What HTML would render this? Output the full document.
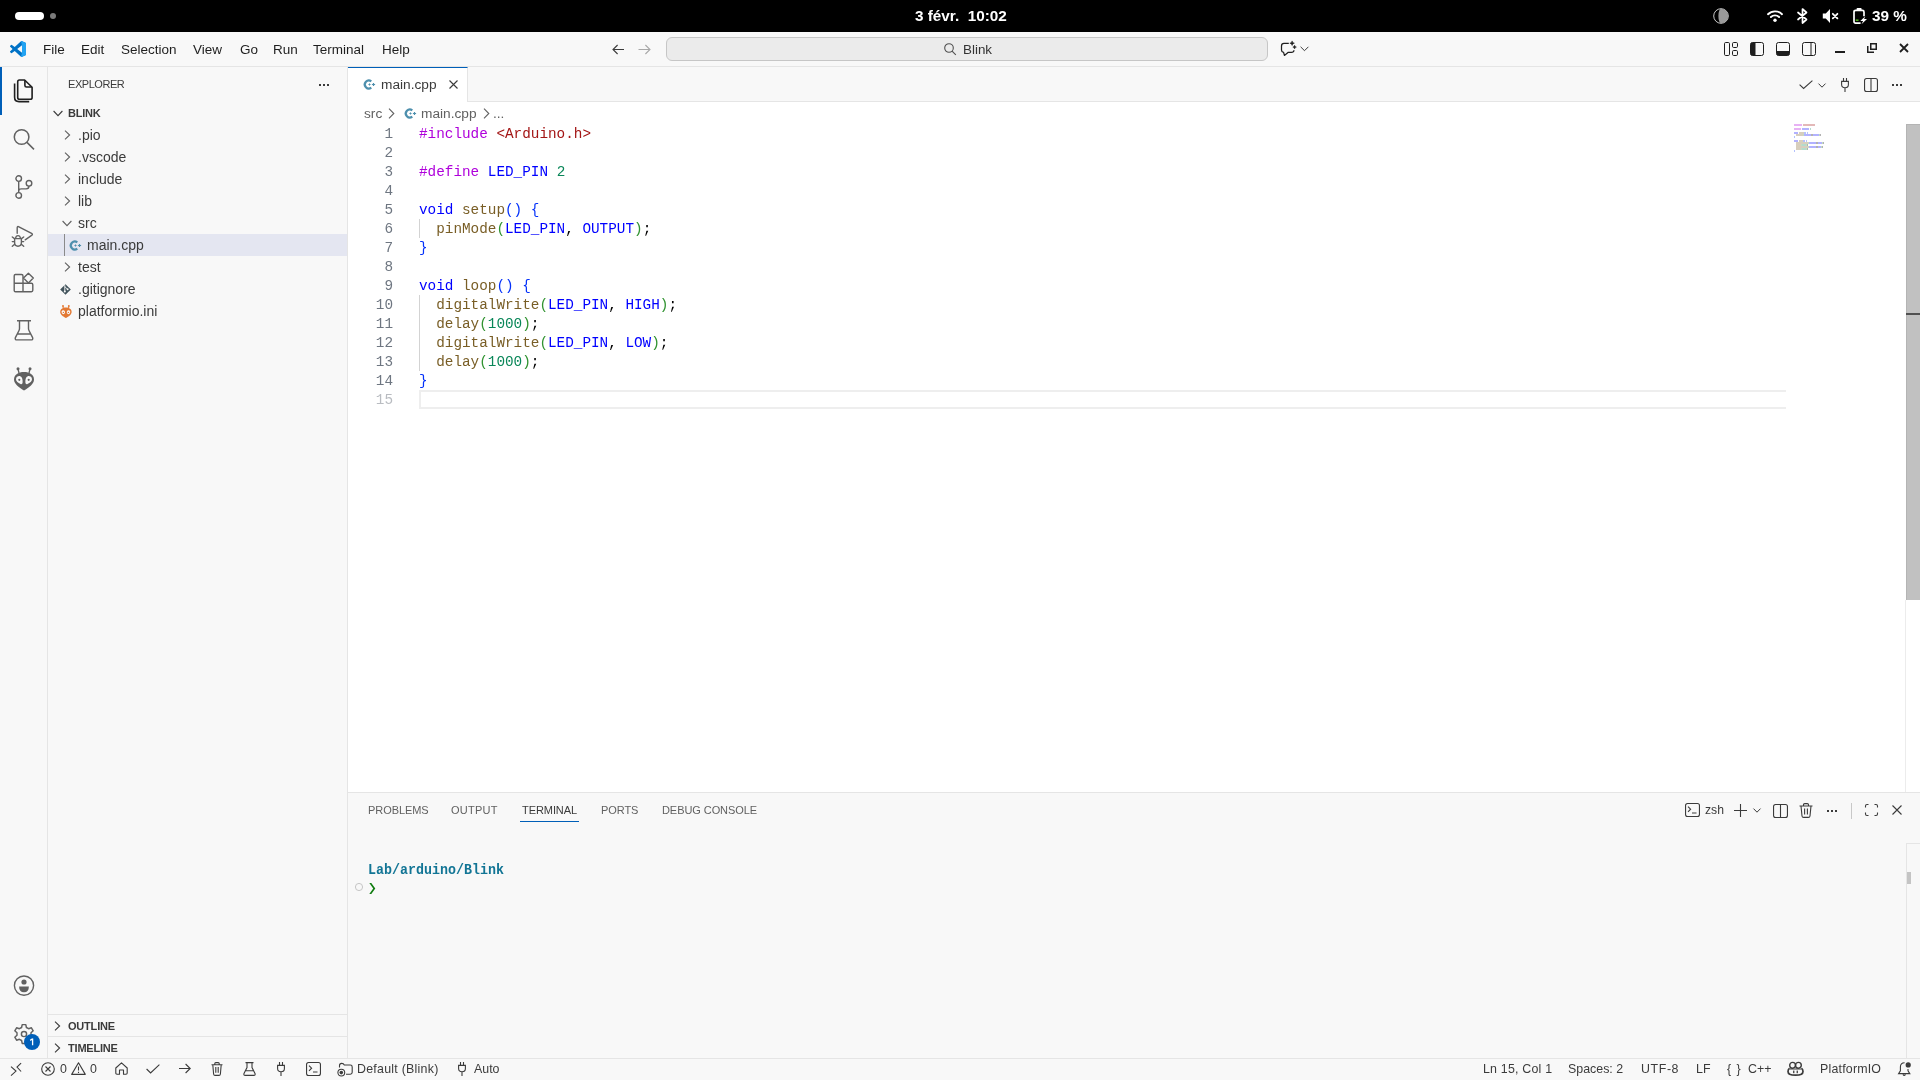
<!DOCTYPE html>
<html><head><meta charset="utf-8">
<style>
*{margin:0;padding:0;box-sizing:border-box}
html,body{width:1920px;height:1080px;overflow:hidden;background:#f8f8f8;font-family:"Liberation Sans",sans-serif;color:#3b3b3b}
.a{position:absolute}
.t{position:absolute;white-space:pre;line-height:1;will-change:transform}
svg{position:absolute;overflow:visible}
#sys{left:0;top:0;width:1920px;height:32px;background:#000}
#title{left:0;top:32px;width:1920px;height:35px;background:#f8f8f8;border-bottom:1px solid #e5e5e5}
.menu{font-size:13.5px;color:#1e1e1e;top:43px}
#act{left:0;top:67px;width:48px;height:991px;background:#f8f8f8;border-right:1px solid #e5e5e5}
#side{left:48px;top:67px;width:300px;height:991px;background:#f8f8f8;border-right:1px solid #e5e5e5}
#editor{left:348px;top:102px;width:1572px;height:690px;background:#fff}
#tabs{left:348px;top:67px;width:1572px;height:35px;background:#f8f8f8;border-bottom:1px solid #e5e5e5}
#panel{left:348px;top:792px;width:1572px;height:266px;background:#f8f8f8;border-top:1px solid #e5e5e5}
#status{left:0;top:1058px;width:1920px;height:22px;background:#f8f8f8;border-top:1px solid #e5e5e5}
.tree{font-size:13.5px;color:#3b3b3b}
.code{font-family:"Liberation Mono",monospace;font-size:14.33px;line-height:19px}
.ln{font-family:"Liberation Mono",monospace;font-size:14.33px;color:#6e7681;text-align:right;width:40px}
</style></head><body>
<div id="sys" class="a"></div>
<div id="title" class="a"></div>
<div id="act" class="a"></div>
<div id="side" class="a"></div>
<div id="tabs" class="a"></div>
<div id="editor" class="a"></div>
<div id="panel" class="a"></div>
<div id="status" class="a"></div>

<!-- SYSTEM BAR -->
<div class="a" style="left:15px;top:12px;width:29px;height:8px;border-radius:4px;background:#fff"></div>
<div class="a" style="left:50px;top:13px;width:6px;height:6px;border-radius:3px;background:#7a7a7a"></div>
<div class="t" style="left:914.5px;top:8px;font-size:15.3px;font-weight:bold;color:#fff">3 févr.  10:02</div>
<svg style="left:1713px;top:8px" width="16" height="16" viewBox="0 0 16 16"><circle cx="8" cy="8" r="7.3" fill="none" stroke="#ddd" stroke-width="0.9"/><path d="M8 0.7 A7.3 7.3 0 0 1 8 15.3 A2.6 7.3 0 0 1 8 0.7Z" fill="#9a9a9a"/></svg>
<svg style="left:1767px;top:10px" width="16" height="12" viewBox="0 0 16 12"><path d="M1 4.2 A10 10 0 0 1 15 4.2" fill="none" stroke="#fff" stroke-width="1.9" stroke-linecap="round"/><path d="M3.9 7 A6 6 0 0 1 12.1 7" fill="none" stroke="#fff" stroke-width="1.9" stroke-linecap="round"/><circle cx="8" cy="10.2" r="1.7" fill="#fff"/></svg>
<svg style="left:1797px;top:8px" width="11" height="16" viewBox="0 0 11 16"><path d="M1 4.5 L9.5 11.5 L5.5 15 V1 L9.5 4.5 L1 11.5" fill="none" stroke="#fff" stroke-width="1.7" stroke-linejoin="round" stroke-linecap="round"/></svg>
<svg style="left:1822px;top:9px" width="17" height="14" viewBox="0 0 17 14"><path d="M0.8 4.4 H3.8 L8 0 V14 L3.8 9.6 H0.8Z" fill="#fff"/><path d="M10.8 4.8 L15.4 9.4 M15.4 4.8 L10.8 9.4" stroke="#fff" stroke-width="1.8" stroke-linecap="round"/></svg>
<svg style="left:1853px;top:8px" width="15" height="17" viewBox="0 0 15 17"><rect x="3.6" y="0" width="5" height="2.6" rx="0.8" fill="#fff"/><path d="M7.6 15.1 H2.6 Q1 15.1 1 13.5 V3.9 Q1 2.3 2.6 2.3 H9.4 Q11 2.3 11 3.9 V8.2" fill="none" stroke="#fff" stroke-width="1.7"/><rect x="2.7" y="11.4" width="2.8" height="1.6" fill="#4caf1a"/><path d="M12.3 8.2 L7.3 13 H10.1 L8.5 16.2 L14 11 H11.1Z" fill="#fff"/></svg>
<div class="t" style="left:1871.5px;top:8px;font-size:15.3px;font-weight:bold;color:#fff">39 %</div>

<!-- TITLE BAR -->
<svg style="left:10px;top:41px" width="16" height="16" viewBox="0 0 100 100"><path fill="#0072C6" d="M96.46 10.8 75.86.87a6.23 6.23 0 0 0-7.1 1.2L29.35 38.04 12.17 25a4.16 4.16 0 0 0-5.32.24L1.34 30.25a4.17 4.17 0 0 0 0 6.16L16.25 50 1.34 63.6a4.17 4.17 0 0 0 0 6.16l5.51 5a4.16 4.16 0 0 0 5.32.24l17.18-13.04L68.76 97.93a6.22 6.22 0 0 0 7.1 1.2l20.6-9.92A6.25 6.25 0 0 0 100 83.6V16.4a6.25 6.25 0 0 0-3.54-5.6zM75.01 72.7 45.11 50l29.9-22.7z"/><path fill="#007ACC" d="M96.46 10.8 75.86.87a6.23 6.23 0 0 0-7.1 1.2L29.35 38.04 12.17 25a4.16 4.16 0 0 0-5.32.24L1.34 30.25a4.17 4.17 0 0 0 0 6.16L16.25 50 1.34 63.6a4.17 4.17 0 0 0 0 6.16l5.51 5a4.16 4.16 0 0 0 5.32.24l17.18-13.04L68.76 97.93a6.22 6.22 0 0 0 7.1 1.2l20.6-9.92A6.25 6.25 0 0 0 100 83.6V16.4a6.25 6.25 0 0 0-3.54-5.6zM75.01 72.7 45.11 50l29.9-22.7z" transform="translate(0,0)" opacity="0"/><path fill="#22A3F2" d="M68.76 2.07a6.23 6.23 0 0 1 7.1-1.2l20.6 9.93A6.25 6.25 0 0 1 100 16.4v67.2a6.25 6.25 0 0 1-3.54 5.63l-20.6 9.92a6.22 6.22 0 0 1-7.1-1.2L75.01 72.7V27.3z"/></svg>
<div class="t menu" style="left:43px">File</div>
<div class="t menu" style="left:81px">Edit</div>
<div class="t menu" style="left:121px">Selection</div>
<div class="t menu" style="left:193px">View</div>
<div class="t menu" style="left:240px">Go</div>
<div class="t menu" style="left:273px">Run</div>
<div class="t menu" style="left:313px">Terminal</div>
<div class="t menu" style="left:382px">Help</div>
<svg style="left:612px;top:43.5px" width="13" height="11" viewBox="0 0 13 11"><path d="M12 5.5 H1.2 M5.6 1 L1 5.5 L5.6 10" fill="none" stroke="#3b3b3b" stroke-width="1.1"/></svg>
<svg style="left:638px;top:43.5px" width="13" height="11" viewBox="0 0 13 11"><path d="M0.5 5.5 H11.8 M7.4 1 L12 5.5 L7.4 10" fill="none" stroke="#a8a8a8" stroke-width="1.1"/></svg>
<div class="a" style="left:666px;top:37px;width:602px;height:24px;border-radius:6px;background:#ebebeb;border:1px solid #c6c6c6"></div>
<svg style="left:944px;top:43px" width="13" height="13" viewBox="0 0 13 13"><circle cx="5" cy="5" r="4.3" fill="none" stroke="#505050" stroke-width="1.1"/><path d="M8.1 8.1 L11.8 11.8" stroke="#505050" stroke-width="1.1"/></svg>
<div class="t" style="left:963px;top:43px;font-size:13.4px;color:#333">Blink</div>
<svg style="left:1280px;top:40px" width="17" height="17" viewBox="0 0 17 17"><path d="M8.8 3.4 H4 Q1.5 3.4 1.5 6 V9.9 Q1.5 12 3.6 12.4 L4.4 15.4 L8 12.4 H11.4 Q13.8 12.4 14 10.2" fill="none" stroke="#1e1e1e" stroke-width="1.25" stroke-linejoin="round"/><path d="M12.1 0.9 L12.8 2.5 L14.4 3.2 L12.8 3.9 L12.1 5.5 L11.4 3.9 L9.8 3.2 L11.4 2.5Z M14.6 5.2 L15.2 6.6 L16.4 7.1 L15.2 7.6 L14.6 9 L14 7.6 L12.8 7.1 L14 6.6Z" fill="#1e1e1e" stroke="#1e1e1e" stroke-width="0.5" stroke-linejoin="round"/></svg>
<svg style="left:1300px;top:46px" width="9" height="6" viewBox="0 0 9 6"><path d="M0.6 0.8 L4.5 4.7 L8.4 0.8" fill="none" stroke="#3b3b3b" stroke-width="1"/></svg>
<svg style="left:1724px;top:42px" width="14" height="14" viewBox="0 0 14 14" fill="none" stroke="#1e1e1e" stroke-width="1"><rect x="0.5" y="0.5" width="5" height="13" rx="1.2"/><rect x="8.5" y="0.5" width="5" height="5" rx="1.2"/><rect x="8.5" y="8.5" width="5" height="5" rx="1.2"/></svg>
<svg style="left:1750px;top:42px" width="14" height="14" viewBox="0 0 14 14"><rect x="0.5" y="0.5" width="13" height="13" rx="2" fill="none" stroke="#1e1e1e" stroke-width="1"/><path d="M2.5 0.5 H5.5 V13.5 H2.5 Q0.5 13.5 0.5 11.5 V2.5 Q0.5 0.5 2.5 0.5Z" fill="#1e1e1e"/></svg>
<svg style="left:1776px;top:42px" width="14" height="14" viewBox="0 0 14 14"><rect x="0.5" y="0.5" width="13" height="13" rx="2" fill="none" stroke="#1e1e1e" stroke-width="1"/><path d="M0.5 9 H13.5 V11.5 Q13.5 13.5 11.5 13.5 H2.5 Q0.5 13.5 0.5 11.5Z" fill="#1e1e1e"/></svg>
<svg style="left:1802px;top:42px" width="14" height="14" viewBox="0 0 14 14" fill="none" stroke="#1e1e1e" stroke-width="1"><rect x="0.5" y="0.5" width="13" height="13" rx="2"/><path d="M9 0.5 V13.5"/></svg>
<div class="a" style="left:1835px;top:51px;width:10px;height:2px;background:#1e1e1e"></div>
<svg style="left:1867px;top:43px" width="10" height="10" viewBox="0 0 10 10" fill="none" stroke="#1e1e1e" stroke-width="1.5"><rect x="3.75" y="0.75" width="5.5" height="5.5"/><path d="M0.75 3 V9.25 H7"/></svg>
<svg style="left:1899px;top:43px" width="10" height="10" viewBox="0 0 10 10"><path d="M1 1 L9 9 M9 1 L1 9" stroke="#1e1e1e" stroke-width="1.8"/></svg>

<!-- ACTIVITY BAR -->
<div class="a" style="left:0;top:67px;width:2px;height:48px;background:#005fb8"></div>
<svg style="left:12px;top:79px" width="24" height="24" viewBox="0 0 24 24" fill="none" stroke="#1f1f1f" stroke-width="1.6" stroke-linejoin="round"><path d="M7.4 1 H12.6 L20.1 8.3 V18.4 Q20.1 20.2 18.3 20.2 H7.5 Q5.7 20.2 5.7 18.4 V2.8 Q5.7 1 7.4 1Z"/><path d="M12.9 1.2 V6.4 Q12.9 8 14.5 8 H20"/><path d="M2.6 4.4 V18.2 Q2.6 22.6 7 22.6 H17.2"/></svg>
<svg style="left:12px;top:127px" width="24" height="24" viewBox="0 0 24 24" fill="none" stroke="#616161" stroke-width="1.5"><circle cx="9.6" cy="10" r="7.3"/><path d="M15 15.4 L22 22.4"/></svg>
<svg style="left:12px;top:175px" width="24" height="24" viewBox="0 0 24 24" fill="none" stroke="#616161" stroke-width="1.4"><circle cx="6.7" cy="3.6" r="2.8"/><circle cx="17" cy="8.3" r="2.8"/><circle cx="6.7" cy="20.4" r="2.8"/><path d="M6.7 6.4 V17.6 M17 11.1 Q17 13.9 14.2 13.9 H9.5 Q6.7 13.9 6.7 16"/></svg>
<svg style="left:10px;top:221px" width="28" height="30" viewBox="0 0 28 30" fill="none" stroke="#616161" stroke-width="1.4" stroke-linecap="round" stroke-linejoin="round"><path d="M7.2 12.2 V6.8 Q7.2 5 8.9 5.8 L21.6 12.4 Q23.2 13.4 21.6 14.4 L15.2 18.8"/><path d="M5.5 17.4 Q6 14.6 8 14.6 Q10 14.6 10.6 17.4 M4.8 17.6 H11.2 M4.6 17.6 V21.5 Q4.6 25.2 8 25.2 Q11.4 25.2 11.4 21.5 V17.6 M2.3 16 L4.5 17.6 M13.7 16 L11.5 17.6 M2.3 20.6 H4.5 M13.7 20.6 H11.5 M2.3 25.3 L4.7 23.3 M13.7 25.3 L11.3 23.3"/></svg>
<svg style="left:12px;top:271px" width="24" height="24" viewBox="0 0 24 24" fill="none" stroke="#616161" stroke-width="1.4"><path d="M3 3.5 H9.5 Q11 3.5 11 5 V20.7 H3.5 Q2.2 20.7 2.2 19.4 V4.8 Q2.2 3.5 3.5 3.5Z M2.2 12.3 H19.4 Q20.8 12.3 20.8 13.7 V19.3 Q20.8 20.7 19.4 20.7 H11"/><path d="M16.4 2.2 L21.3 7.1 L16.4 12 L11.5 7.1Z" stroke-linejoin="round"/></svg>
<svg style="left:12px;top:319px" width="24" height="24" viewBox="0 0 24 24" fill="none" stroke="#616161" stroke-width="1.4"><path d="M5 1.8 H19 M7.5 1.8 V9.5 Q7.5 10.5 6.9 11.7 L3.4 18.6 Q2.6 20.9 5 20.9 H19 Q21.4 20.9 20.6 18.6 L17.1 11.7 Q16.5 10.5 16.5 9.5 V1.8 M5.8 15 H18.2"/></svg>
<svg style="left:13px;top:367px" width="22" height="24" viewBox="0 0 22 24"><path d="M6 6 L5 2 M16 6 L17 2" stroke="#616161" stroke-width="1.3"/><circle cx="5" cy="1.7" r="1.5" fill="#616161"/><circle cx="17" cy="1.7" r="1.5" fill="#616161"/><path d="M11 5 C5.5 5 1 7.5 1 12.5 C1 17 6.5 21 11 23.5 C15.5 21 21 17 21 12.5 C21 7.5 16.5 5 11 5Z" fill="#616161"/><path d="M3 12.3 C3 9.5 5.5 8.8 7.2 9.2 C9.2 9.7 9.8 12.5 9.6 15.5 C9.5 17 8.5 17.5 7.5 17 C5 15.8 3 14.5 3 12.3Z M19 12.3 C19 9.5 16.5 8.8 14.8 9.2 C12.8 9.7 12.2 12.5 12.4 15.5 C12.5 17 13.5 17.5 14.5 17 C17 15.8 19 14.5 19 12.3Z" fill="#f8f8f8"/><circle cx="6.3" cy="12.8" r="1.1" fill="#616161"/><circle cx="15.7" cy="12.8" r="1.1" fill="#616161"/></svg>
<svg style="left:12px;top:974px" width="24" height="24" viewBox="0 0 24 24"><circle cx="12" cy="11.6" r="9.6" fill="none" stroke="#616161" stroke-width="1.4"/><circle cx="12" cy="8" r="2.6" fill="#616161"/><path d="M7.1 12.4 H16.9 Q16.9 18.2 12 18.2 Q7.1 18.2 7.1 12.4Z" fill="#616161"/></svg>
<svg style="left:12px;top:1022.8px" width="24" height="24" viewBox="0 0 24 24" fill="none" stroke="#616161" stroke-width="1.45"><path d="M10.2 1.6 H13.8 L14.4 4.5 L16.6 5.7 L19.4 4.8 L21.2 7.8 L19 9.8 V12.2 L21.2 14.2 L19.4 17.2 L16.6 16.3 L14.4 17.5 L13.8 20.4 H10.2 L9.6 17.5 L7.4 16.3 L4.6 17.2 L2.8 14.2 L5 12.2 V9.8 L2.8 7.8 L4.6 4.8 L7.4 5.7 L9.6 4.5Z" stroke-linejoin="round"/><circle cx="12" cy="11" r="2.6"/></svg>
<div class="a" style="left:24px;top:1034px;width:16px;height:16px;border-radius:8px;background:#005fb8"></div>
<svg style="left:29px;top:1038px" width="6" height="8" viewBox="0 0 6 8"><path d="M3.6 0.6 V7.2 M3.6 0.8 L1.2 2.4" fill="none" stroke="#fff" stroke-width="1.3" stroke-linejoin="round"/></svg>

<!-- SIDEBAR -->
<div class="t" style="left:68px;top:78.69px;font-size:11px;letter-spacing:-0.45px;color:#3b3b3b">EXPLORER</div>
<svg style="left:319px;top:84px" width="10" height="2" viewBox="0 0 10 2" fill="#3b3b3b"><rect x="0" y="0" width="2" height="2"/><rect x="4" y="0" width="2" height="2"/><rect x="8" y="0" width="2" height="2"/></svg>
<svg style="left:53px;top:110px" width="10" height="7" viewBox="0 0 10 7"><path d="M0.6 1 L5 5.6 L9.4 1" fill="none" stroke="#3b3b3b" stroke-width="1.1"/></svg>
<div class="t" style="left:68px;top:107.69px;font-size:11px;font-weight:bold;letter-spacing:-0.2px;color:#3b3b3b">BLINK</div>
<div class="a" style="left:48px;top:234px;width:299px;height:22px;background:#e4e6f1"></div>
<div class="a" style="left:64px;top:234px;width:1px;height:22px;background:#8a8a8a"></div>
<svg style="left:64px;top:130px" width="7" height="10" viewBox="0 0 7 10"><path d="M1 0.6 L5.6 5 L1 9.4" fill="none" stroke="#616161" stroke-width="1.1"/></svg>
<div class="t" style="left:78px;top:128.15px;font-size:14px;color:#3b3b3b">.pio</div>
<svg style="left:64px;top:152px" width="7" height="10" viewBox="0 0 7 10"><path d="M1 0.6 L5.6 5 L1 9.4" fill="none" stroke="#616161" stroke-width="1.1"/></svg>
<div class="t" style="left:78px;top:150.15px;font-size:14px;color:#3b3b3b">.vscode</div>
<svg style="left:64px;top:174px" width="7" height="10" viewBox="0 0 7 10"><path d="M1 0.6 L5.6 5 L1 9.4" fill="none" stroke="#616161" stroke-width="1.1"/></svg>
<div class="t" style="left:78px;top:172.15px;font-size:14px;color:#3b3b3b">include</div>
<svg style="left:64px;top:196px" width="7" height="10" viewBox="0 0 7 10"><path d="M1 0.6 L5.6 5 L1 9.4" fill="none" stroke="#616161" stroke-width="1.1"/></svg>
<div class="t" style="left:78px;top:194.15px;font-size:14px;color:#3b3b3b">lib</div>
<svg style="left:62px;top:220px" width="10" height="7" viewBox="0 0 10 7"><path d="M0.6 1 L5 5.6 L9.4 1" fill="none" stroke="#616161" stroke-width="1.1"/></svg>
<div class="t" style="left:78px;top:216.15px;font-size:14px;color:#3b3b3b">src</div>
<svg style="left:70px;top:240px" width="12" height="12" viewBox="0 0 12 12"><path d="M7.3 2.35 A4 4 0 1 0 7.3 8.65" fill="none" stroke="#4d8fad" stroke-width="2.2"/><path d="M5.5 4.4 V6.6 M4.4 5.5 H6.6" stroke="#4d8fad" stroke-width="0.9"/><path d="M9.5 3.9 V7.1 M7.9 5.5 H11.1" stroke="#4d8fad" stroke-width="1.2"/></svg>
<div class="t" style="left:87px;top:238.15px;font-size:14px;color:#3b3b3b">main.cpp</div>
<svg style="left:64px;top:262px" width="7" height="10" viewBox="0 0 7 10"><path d="M1 0.6 L5.6 5 L1 9.4" fill="none" stroke="#616161" stroke-width="1.1"/></svg>
<div class="t" style="left:78px;top:260.15px;font-size:14px;color:#3b3b3b">test</div>
<svg style="left:60px;top:284px" width="11" height="11" viewBox="0 0 11 11"><path d="M5.5 0.2 L10.8 5.5 L5.5 10.8 L0.2 5.5Z" fill="#41535b"/><path d="M4.8 1.2 V7.4 M4.8 2.6 L7.6 5.3" stroke="#f8f8f8" stroke-width="0.9" fill="none"/><circle cx="4.8" cy="7.4" r="1" fill="#f8f8f8"/><circle cx="7.6" cy="5.3" r="1" fill="#f8f8f8"/></svg>
<div class="t" style="left:78px;top:282.15px;font-size:14px;color:#3b3b3b">.gitignore</div>
<svg style="left:60px;top:305px" width="12" height="13" viewBox="0 0 12 13"><path d="M3.2 3.2 L3 0.8 M8.6 3.2 L8.8 0.8" stroke="#e37933" stroke-width="1.1"/><circle cx="3" cy="0.9" r="0.9" fill="#e37933"/><circle cx="8.8" cy="0.9" r="0.9" fill="#e37933"/><path d="M5.9 2.4 C2.6 2.4 0.2 4 0.2 7 C0.2 9.6 3.2 11.7 5.9 12.9 C8.6 11.7 11.6 9.6 11.6 7 C11.6 4 9.2 2.4 5.9 2.4Z" fill="#e37933"/><ellipse cx="3.3" cy="7.2" rx="1.7" ry="2" fill="#f8f8f8" transform="rotate(-20 3.3 7.2)"/><ellipse cx="8.5" cy="7.2" rx="1.7" ry="2" fill="#f8f8f8" transform="rotate(20 8.5 7.2)"/><circle cx="3.4" cy="7.4" r="0.7" fill="#e37933"/><circle cx="8.4" cy="7.4" r="0.7" fill="#e37933"/></svg>
<div class="t" style="left:78px;top:304.15px;font-size:14px;color:#3b3b3b">platformio.ini</div>
<div class="a" style="left:48px;top:1014px;width:299px;height:1px;background:#e5e5e5"></div>
<div class="a" style="left:48px;top:1036px;width:299px;height:1px;background:#e5e5e5"></div>
<svg style="left:54px;top:1021px" width="7" height="10" viewBox="0 0 7 10"><path d="M1 0.6 L5.6 5 L1 9.4" fill="none" stroke="#3b3b3b" stroke-width="1.1"/></svg>
<div class="t" style="left:68px;top:1020.69px;font-size:11px;font-weight:bold;letter-spacing:-0.2px;color:#3b3b3b">OUTLINE</div>
<svg style="left:54px;top:1043px" width="7" height="10" viewBox="0 0 7 10"><path d="M1 0.6 L5.6 5 L1 9.4" fill="none" stroke="#3b3b3b" stroke-width="1.1"/></svg>
<div class="t" style="left:68px;top:1042.69px;font-size:11px;font-weight:bold;letter-spacing:-0.2px;color:#3b3b3b">TIMELINE</div>

<!-- EDITOR TABS -->
<div class="a" style="left:348px;top:67px;width:120px;height:35px;background:#fff;border-top:1px solid #005fb8;border-right:1px solid #e5e5e5"></div>
<svg style="left:364px;top:79px" width="12" height="12" viewBox="0 0 12 12"><path d="M7.3 2.35 A4 4 0 1 0 7.3 8.65" fill="none" stroke="#4d8fad" stroke-width="2.2"/><path d="M5.5 4.4 V6.6 M4.4 5.5 H6.6" stroke="#4d8fad" stroke-width="0.9"/><path d="M9.5 3.9 V7.1 M7.9 5.5 H11.1" stroke="#4d8fad" stroke-width="1.2"/></svg>
<div class="t" style="left:380.5px;top:77.7px;font-size:13.7px;color:#3b3b3b">main.cpp</div>
<svg style="left:449px;top:80px" width="9" height="9" viewBox="0 0 9 9"><path d="M0.5 0.5 L8.5 8.5 M8.5 0.5 L0.5 8.5" stroke="#3b3b3b" stroke-width="1.1"/></svg>
<svg style="left:1799px;top:80px" width="14" height="9" viewBox="0 0 14 9"><path d="M0.6 4.6 L4.6 8.4 L13.4 0.6" fill="none" stroke="#3b3b3b" stroke-width="1.1"/></svg>
<svg style="left:1818px;top:83px" width="8" height="5" viewBox="0 0 8 5"><path d="M0.5 0.6 L4 4.2 L7.5 0.6" fill="none" stroke="#3b3b3b" stroke-width="1"/></svg>
<svg style="left:1840px;top:78px" width="10" height="14" viewBox="0 0 10 14" fill="none" stroke="#3b3b3b" stroke-width="1.1"><path d="M3.5 0 V3.2 M6.5 0 V3.2 M1.6 3.4 H8.4 V6.4 Q8.4 9.7 5 9.7 Q1.6 9.7 1.6 6.4Z M5 9.7 V14"/></svg>
<svg style="left:1864px;top:78px" width="14" height="14" viewBox="0 0 14 14" fill="none" stroke="#3b3b3b" stroke-width="1.1"><rect x="0.55" y="0.55" width="12.9" height="12.9" rx="2"/><path d="M7 0.5 V13.5"/></svg>
<svg style="left:1892px;top:84px" width="10" height="2" viewBox="0 0 10 2" fill="#3b3b3b"><rect x="0" y="0" width="2" height="2"/><rect x="4" y="0" width="2" height="2"/><rect x="8" y="0" width="2" height="2"/></svg>
<div class="t" style="left:364px;top:106.5px;font-size:13.7px;color:#616161">src</div>
<svg style="left:388px;top:108px" width="7" height="11" viewBox="0 0 7 11"><path d="M1 0.6 L5.8 5.5 L1 10.4" fill="none" stroke="#616161" stroke-width="1.1"/></svg>
<svg style="left:405px;top:108px" width="12" height="12" viewBox="0 0 12 12"><path d="M7.3 2.35 A4 4 0 1 0 7.3 8.65" fill="none" stroke="#4d8fad" stroke-width="2.2"/><path d="M5.5 4.4 V6.6 M4.4 5.5 H6.6" stroke="#4d8fad" stroke-width="0.9"/><path d="M9.5 3.9 V7.1 M7.9 5.5 H11.1" stroke="#4d8fad" stroke-width="1.2"/></svg>
<div class="t" style="left:421px;top:106.5px;font-size:13.7px;color:#616161">main.cpp</div>
<svg style="left:483px;top:108px" width="7" height="11" viewBox="0 0 7 11"><path d="M1 0.6 L5.8 5.5 L1 10.4" fill="none" stroke="#616161" stroke-width="1.1"/></svg>
<div class="t" style="left:493px;top:106.5px;font-size:13.7px;color:#616161">...</div>

<!-- CODE -->
<div class="a" style="left:419px;top:390px;width:1367px;height:19px;border:2px solid #eeeeee;border-right:none"></div>
<div class="a" style="left:419px;top:219px;width:1px;height:19px;background:#d3d3d3"></div>
<div class="a" style="left:419px;top:295px;width:1px;height:19px;background:#d3d3d3"></div>
<div class="a" style="left:419px;top:314px;width:1px;height:19px;background:#d3d3d3"></div>
<div class="a" style="left:419px;top:333px;width:1px;height:19px;background:#d3d3d3"></div>
<div class="a" style="left:419px;top:352px;width:1px;height:19px;background:#d3d3d3"></div>
<div class="t ln" style="left:353px;top:125px;line-height:19px;color:#6e7681">1</div>
<div class="t code" style="left:419px;top:125px;color:#000"><span style="color:#af00db">#include</span> <span style="color:#a31515">&lt;Arduino.h&gt;</span></div>
<div class="t ln" style="left:353px;top:144px;line-height:19px;color:#6e7681">2</div>
<div class="t ln" style="left:353px;top:163px;line-height:19px;color:#6e7681">3</div>
<div class="t code" style="left:419px;top:163px;color:#000"><span style="color:#af00db">#define</span> <span style="color:#0000ff">LED_PIN</span> <span style="color:#098658">2</span></div>
<div class="t ln" style="left:353px;top:182px;line-height:19px;color:#6e7681">4</div>
<div class="t ln" style="left:353px;top:201px;line-height:19px;color:#6e7681">5</div>
<div class="t code" style="left:419px;top:201px;color:#000"><span style="color:#0000ff">void</span> <span style="color:#795e26">setup</span><span style="color:#0431fa">()</span> <span style="color:#0431fa">{</span></div>
<div class="t ln" style="left:353px;top:220px;line-height:19px;color:#6e7681">6</div>
<div class="t code" style="left:419px;top:220px;color:#000">  <span style="color:#795e26">pinMode</span><span style="color:#319331">(</span><span style="color:#0000ff">LED_PIN</span><span style="color:#000000">, </span><span style="color:#0000ff">OUTPUT</span><span style="color:#319331">)</span><span style="color:#000000">;</span></div>
<div class="t ln" style="left:353px;top:239px;line-height:19px;color:#6e7681">7</div>
<div class="t code" style="left:419px;top:239px;color:#000"><span style="color:#0431fa">}</span></div>
<div class="t ln" style="left:353px;top:258px;line-height:19px;color:#6e7681">8</div>
<div class="t ln" style="left:353px;top:277px;line-height:19px;color:#6e7681">9</div>
<div class="t code" style="left:419px;top:277px;color:#000"><span style="color:#0000ff">void</span> <span style="color:#795e26">loop</span><span style="color:#0431fa">()</span> <span style="color:#0431fa">{</span></div>
<div class="t ln" style="left:353px;top:296px;line-height:19px;color:#6e7681">10</div>
<div class="t code" style="left:419px;top:296px;color:#000">  <span style="color:#795e26">digitalWrite</span><span style="color:#319331">(</span><span style="color:#0000ff">LED_PIN</span><span style="color:#000000">, </span><span style="color:#0000ff">HIGH</span><span style="color:#319331">)</span><span style="color:#000000">;</span></div>
<div class="t ln" style="left:353px;top:315px;line-height:19px;color:#6e7681">11</div>
<div class="t code" style="left:419px;top:315px;color:#000">  <span style="color:#795e26">delay</span><span style="color:#319331">(</span><span style="color:#098658">1000</span><span style="color:#319331">)</span><span style="color:#000000">;</span></div>
<div class="t ln" style="left:353px;top:334px;line-height:19px;color:#6e7681">12</div>
<div class="t code" style="left:419px;top:334px;color:#000">  <span style="color:#795e26">digitalWrite</span><span style="color:#319331">(</span><span style="color:#0000ff">LED_PIN</span><span style="color:#000000">, </span><span style="color:#0000ff">LOW</span><span style="color:#319331">)</span><span style="color:#000000">;</span></div>
<div class="t ln" style="left:353px;top:353px;line-height:19px;color:#6e7681">13</div>
<div class="t code" style="left:419px;top:353px;color:#000">  <span style="color:#795e26">delay</span><span style="color:#319331">(</span><span style="color:#098658">1000</span><span style="color:#319331">)</span><span style="color:#000000">;</span></div>
<div class="t ln" style="left:353px;top:372px;line-height:19px;color:#6e7681">14</div>
<div class="t code" style="left:419px;top:372px;color:#000"><span style="color:#0431fa">}</span></div>
<div class="t ln" style="left:353px;top:391px;line-height:19px;color:#b9bcc1">15</div>
<div class="a" style="left:1794px;top:124px;width:8px;height:2px;background:#af00db;opacity:0.3"></div>
<div class="a" style="left:1803px;top:124px;width:12px;height:2px;background:#a31515;opacity:0.3"></div>
<div class="a" style="left:1794px;top:128px;width:7px;height:2px;background:#af00db;opacity:0.3"></div>
<div class="a" style="left:1802px;top:128px;width:7px;height:2px;background:#0000ff;opacity:0.3"></div>
<div class="a" style="left:1810px;top:128px;width:1px;height:2px;background:#098658;opacity:0.3"></div>
<div class="a" style="left:1794px;top:132px;width:4px;height:2px;background:#0000ff;opacity:0.3"></div>
<div class="a" style="left:1799px;top:132px;width:5px;height:2px;background:#795e26;opacity:0.3"></div>
<div class="a" style="left:1804px;top:132px;width:2px;height:2px;background:#0431fa;opacity:0.3"></div>
<div class="a" style="left:1807px;top:132px;width:1px;height:2px;background:#0431fa;opacity:0.3"></div>
<div class="a" style="left:1796px;top:134px;width:7px;height:2px;background:#795e26;opacity:0.3"></div>
<div class="a" style="left:1803px;top:134px;width:1px;height:2px;background:#319331;opacity:0.3"></div>
<div class="a" style="left:1804px;top:134px;width:7px;height:2px;background:#0000ff;opacity:0.3"></div>
<div class="a" style="left:1811px;top:134px;width:2px;height:2px;background:#000000;opacity:0.3"></div>
<div class="a" style="left:1813px;top:134px;width:6px;height:2px;background:#0000ff;opacity:0.3"></div>
<div class="a" style="left:1819px;top:134px;width:1px;height:2px;background:#319331;opacity:0.3"></div>
<div class="a" style="left:1820px;top:134px;width:1px;height:2px;background:#000000;opacity:0.3"></div>
<div class="a" style="left:1794px;top:136px;width:1px;height:2px;background:#0431fa;opacity:0.3"></div>
<div class="a" style="left:1794px;top:140px;width:4px;height:2px;background:#0000ff;opacity:0.3"></div>
<div class="a" style="left:1799px;top:140px;width:4px;height:2px;background:#795e26;opacity:0.3"></div>
<div class="a" style="left:1803px;top:140px;width:2px;height:2px;background:#0431fa;opacity:0.3"></div>
<div class="a" style="left:1806px;top:140px;width:1px;height:2px;background:#0431fa;opacity:0.3"></div>
<div class="a" style="left:1796px;top:142px;width:12px;height:2px;background:#795e26;opacity:0.3"></div>
<div class="a" style="left:1808px;top:142px;width:1px;height:2px;background:#319331;opacity:0.3"></div>
<div class="a" style="left:1809px;top:142px;width:7px;height:2px;background:#0000ff;opacity:0.3"></div>
<div class="a" style="left:1816px;top:142px;width:2px;height:2px;background:#000000;opacity:0.3"></div>
<div class="a" style="left:1818px;top:142px;width:4px;height:2px;background:#0000ff;opacity:0.3"></div>
<div class="a" style="left:1822px;top:142px;width:1px;height:2px;background:#319331;opacity:0.3"></div>
<div class="a" style="left:1823px;top:142px;width:1px;height:2px;background:#000000;opacity:0.3"></div>
<div class="a" style="left:1796px;top:144px;width:5px;height:2px;background:#795e26;opacity:0.3"></div>
<div class="a" style="left:1801px;top:144px;width:1px;height:2px;background:#319331;opacity:0.3"></div>
<div class="a" style="left:1802px;top:144px;width:4px;height:2px;background:#098658;opacity:0.3"></div>
<div class="a" style="left:1806px;top:144px;width:1px;height:2px;background:#319331;opacity:0.3"></div>
<div class="a" style="left:1807px;top:144px;width:1px;height:2px;background:#000000;opacity:0.3"></div>
<div class="a" style="left:1796px;top:146px;width:12px;height:2px;background:#795e26;opacity:0.3"></div>
<div class="a" style="left:1808px;top:146px;width:1px;height:2px;background:#319331;opacity:0.3"></div>
<div class="a" style="left:1809px;top:146px;width:7px;height:2px;background:#0000ff;opacity:0.3"></div>
<div class="a" style="left:1816px;top:146px;width:2px;height:2px;background:#000000;opacity:0.3"></div>
<div class="a" style="left:1818px;top:146px;width:3px;height:2px;background:#0000ff;opacity:0.3"></div>
<div class="a" style="left:1821px;top:146px;width:1px;height:2px;background:#319331;opacity:0.3"></div>
<div class="a" style="left:1822px;top:146px;width:1px;height:2px;background:#000000;opacity:0.3"></div>
<div class="a" style="left:1796px;top:148px;width:5px;height:2px;background:#795e26;opacity:0.3"></div>
<div class="a" style="left:1801px;top:148px;width:1px;height:2px;background:#319331;opacity:0.3"></div>
<div class="a" style="left:1802px;top:148px;width:4px;height:2px;background:#098658;opacity:0.3"></div>
<div class="a" style="left:1806px;top:148px;width:1px;height:2px;background:#319331;opacity:0.3"></div>
<div class="a" style="left:1807px;top:148px;width:1px;height:2px;background:#000000;opacity:0.3"></div>
<div class="a" style="left:1794px;top:150px;width:1px;height:2px;background:#0431fa;opacity:0.3"></div>
<div class="a" style="left:1906px;top:124px;width:14px;height:476px;background:#c1c1c1;border-top:1px solid #b4b4b4;border-left:1px solid #b4b4b4"></div>
<div class="a" style="left:1906px;top:313px;width:14px;height:2px;background:#505050"></div>
<div class="a" style="left:1905px;top:600px;width:1px;height:192px;background:#ececec"></div>

<!-- PANEL -->
<div class="t" style="left:368px;top:804.69px;font-size:11px;letter-spacing:-0.07px;color:#616161">PROBLEMS</div>
<div class="t" style="left:451px;top:804.69px;font-size:11px;letter-spacing:0.25px;color:#616161">OUTPUT</div>
<div class="t" style="left:522px;top:804.69px;font-size:11px;letter-spacing:-0.07px;color:#3b3b3b">TERMINAL</div>
<div class="t" style="left:601px;top:804.69px;font-size:11px;letter-spacing:-0.07px;color:#616161">PORTS</div>
<div class="t" style="left:662px;top:804.69px;font-size:11px;letter-spacing:-0.07px;color:#616161">DEBUG CONSOLE</div>
<div class="a" style="left:520px;top:821px;width:59px;height:1px;background:#005fb8"></div>
<div class="t" style="left:367.8px;top:863.79px;font-size:13.33px;font-family:'Liberation Mono',monospace;font-weight:bold;color:#127595;transform:scaleY(1.12);transform-origin:0 10.3px">Lab/arduino/Blink</div>
<svg style="left:354px;top:882px" width="10" height="10" viewBox="0 0 10 10"><circle cx="5" cy="5" r="3.6" fill="none" stroke="#c0c0c0" stroke-width="0.9"/></svg>
<svg style="left:369px;top:883px" width="7" height="11" viewBox="0 0 7 11"><path d="M0.3 0 H2.3 L6.3 5.5 L2.3 11 H0.3 L4.2 5.5Z" fill="#107c10"/></svg>
<svg style="left:1685px;top:803px" width="15" height="14" viewBox="0 0 15 14" fill="none" stroke="#3b3b3b" stroke-width="1.1"><rect x="0.55" y="0.55" width="13.9" height="12.9" rx="2"/><path d="M3 3.6 L5.6 6.2 L3 8.8 M7 10 H11.5"/></svg>
<div class="t" style="left:1704.5px;top:803.9px;font-size:12.2px;color:#3b3b3b">zsh</div>
<svg style="left:1734px;top:804px" width="13" height="13" viewBox="0 0 13 13" stroke="#3b3b3b" stroke-width="1.1"><path d="M6.5 0 V13 M0 6.5 H13"/></svg>
<svg style="left:1753px;top:808px" width="8" height="5" viewBox="0 0 8 5"><path d="M0.5 0.6 L4 4.2 L7.5 0.6" fill="none" stroke="#3b3b3b" stroke-width="1"/></svg>
<svg style="left:1773px;top:804px" width="15" height="14" viewBox="0 0 15 14" fill="none" stroke="#3b3b3b" stroke-width="1.1"><rect x="0.55" y="0.55" width="13.9" height="12.9" rx="2"/><path d="M7.5 0.5 V13.5"/></svg>
<svg style="left:1799px;top:803px" width="14" height="15" viewBox="0 0 14 15" fill="none" stroke="#3b3b3b" stroke-width="1.1"><path d="M0.5 3 H13.5 M4.5 3 V1.8 Q4.5 0.6 5.7 0.6 H8.3 Q9.5 0.6 9.5 1.8 V3 M2 3 L3 13 Q3.2 14.4 4.6 14.4 H9.4 Q10.8 14.4 11 13 L12 3 M5.6 5.5 V11.5 M8.4 5.5 V11.5"/></svg>
<svg style="left:1827px;top:810px" width="10" height="2" viewBox="0 0 10 2" fill="#3b3b3b"><rect x="0" y="0" width="2" height="2"/><rect x="4" y="0" width="2" height="2"/><rect x="8" y="0" width="2" height="2"/></svg>
<div class="a" style="left:1851px;top:803px;width:1px;height:16px;background:#c8c8c8"></div>
<svg style="left:1865px;top:804px" width="13" height="12" viewBox="0 0 13 12" fill="none" stroke="#3b3b3b" stroke-width="1.1"><path d="M0.5 3.5 V2 Q0.5 0.5 2 0.5 H3.5 M9.5 0.5 H11 Q12.5 0.5 12.5 2 V3.5 M12.5 8.5 V10 Q12.5 11.5 11 11.5 H9.5 M3.5 11.5 H2 Q0.5 11.5 0.5 10 V8.5"/></svg>
<svg style="left:1892px;top:805px" width="10" height="10" viewBox="0 0 10 10"><path d="M0.5 0.5 L9.5 9.5 M9.5 0.5 L0.5 9.5" stroke="#3b3b3b" stroke-width="1.1"/></svg>
<div class="a" style="left:1906px;top:843px;width:14px;height:215px;border-left:1px solid #e5e5e5;border-top:1px solid #e5e5e5"></div>
<div class="a" style="left:1907px;top:872px;width:4px;height:12px;background:#c4c4c4"></div>

<!-- STATUS BAR -->
<svg style="left:10px;top:1062px" width="13" height="15" viewBox="0 0 13 15" fill="none" stroke="#3b3b3b" stroke-width="1.1"><path d="M1 4.7 L6 9.1 L1 13.6 M11.1 1.2 L7 5 L11.1 9.5"/></svg>
<svg style="left:41px;top:1062px" width="14" height="14" viewBox="0 0 14 14" fill="none" stroke="#3b3b3b" stroke-width="1.1"><circle cx="7" cy="7" r="6.3"/><path d="M4.5 4.5 L9.5 9.5 M9.5 4.5 L4.5 9.5"/></svg>
<div class="t" style="left:59.5px;top:1062.80px;font-size:12.4px;color:#3b3b3b">0</div>
<svg style="left:71px;top:1062px" width="15" height="13" viewBox="0 0 15 13" fill="none" stroke="#3b3b3b" stroke-width="1.1"><path d="M7.5 0.8 L14.3 12.4 H0.7Z M7.5 4.5 V8.5 M7.5 9.8 V11" stroke-linejoin="round"/></svg>
<div class="t" style="left:89.5px;top:1062.80px;font-size:12.4px;color:#3b3b3b">0</div>
<svg style="left:115px;top:1062px" width="13" height="13" viewBox="0 0 13 13" fill="none" stroke="#3b3b3b" stroke-width="1.1"><path d="M0.8 6 L6.5 0.8 L12.2 6 V11 Q12.2 12.2 11 12.2 H8.5 V8 H4.5 V12.2 H2 Q0.8 12.2 0.8 11Z" stroke-linejoin="round"/></svg>
<svg style="left:146px;top:1064px" width="14" height="10" viewBox="0 0 14 10"><path d="M0.6 5 L4.6 9 L13.4 0.6" fill="none" stroke="#3b3b3b" stroke-width="1.1"/></svg>
<svg style="left:179px;top:1063px" width="12" height="11" viewBox="0 0 12 11"><path d="M0 5.5 H11.2 M6.6 1 L11.2 5.5 L6.6 10" fill="none" stroke="#3b3b3b" stroke-width="1.1"/></svg>
<svg style="left:211px;top:1062px" width="12" height="14" viewBox="0 0 12 14" fill="none" stroke="#3b3b3b" stroke-width="1.1"><path d="M0.5 2.8 H11.5 M3.8 2.8 V1.6 Q3.8 0.6 4.8 0.6 H7.2 Q8.2 0.6 8.2 1.6 V2.8 M1.8 2.8 L2.6 12 Q2.8 13.4 4 13.4 H8 Q9.2 13.4 9.4 12 L10.2 2.8 M4.8 5 V10.8 M7.2 5 V10.8"/></svg>
<svg style="left:243px;top:1062px" width="13" height="14" viewBox="0 0 13 14" fill="none" stroke="#3b3b3b" stroke-width="1.1"><path d="M2.5 0.6 H10.5 M4 0.6 V5.5 L1 11.5 Q0.4 13.4 2.2 13.4 H10.8 Q12.6 13.4 12 11.5 L9 5.5 V0.6 M2.8 8.8 H10.2"/></svg>
<svg style="left:276px;top:1062px" width="10" height="14" viewBox="0 0 10 14" fill="none" stroke="#3b3b3b" stroke-width="1.1"><path d="M3.5 0 V3.2 M6.5 0 V3.2 M1.6 3.4 H8.4 V6.4 Q8.4 9.7 5 9.7 Q1.6 9.7 1.6 6.4Z M5 9.7 V14"/></svg>
<svg style="left:306px;top:1062px" width="15" height="14" viewBox="0 0 15 14" fill="none" stroke="#3b3b3b" stroke-width="1.1"><rect x="0.55" y="0.55" width="13.9" height="12.9" rx="2"/><path d="M3 3.6 L5.6 6.2 L3 8.8 M7 10 H11.5"/></svg>
<svg style="left:337px;top:1062px" width="17" height="16" viewBox="0 0 17 16"><path d="M2.5 5.5 V3.6 Q2.5 1.4 4.7 1.4 Q6.6 1.4 7.3 3 H13.3 Q15.2 3 15.2 4.9 V10.3 Q15.2 12.2 13.3 12.2 H9" fill="none" stroke="#3b3b3b" stroke-width="1.1"/><circle cx="4.3" cy="10.6" r="3.4" fill="#f8f8f8" stroke="#3b3b3b" stroke-width="1.1"/><circle cx="4.3" cy="10.6" r="1.8" fill="#3b3b3b"/></svg>
<div class="t" style="left:357px;top:1062.80px;font-size:12.4px;color:#3b3b3b;letter-spacing:0.25px">Default (Blink)</div>
<svg style="left:457px;top:1062px" width="10" height="14" viewBox="0 0 10 14" fill="none" stroke="#3b3b3b" stroke-width="1.1"><path d="M3.5 0 V3.2 M6.5 0 V3.2 M1.6 3.4 H8.4 V6.4 Q8.4 9.7 5 9.7 Q1.6 9.7 1.6 6.4Z M5 9.7 V14"/></svg>
<div class="t" style="left:473.5px;top:1062.80px;font-size:12.4px;color:#3b3b3b">Auto</div>
<div class="t" style="left:1483px;top:1062.80px;font-size:12.4px;color:#3b3b3b;letter-spacing:0.2px">Ln 15, Col 1</div>
<div class="t" style="left:1568px;top:1062.80px;font-size:12.4px;color:#3b3b3b">Spaces: 2</div>
<div class="t" style="left:1640.5px;top:1062.80px;font-size:12.4px;color:#3b3b3b;letter-spacing:0.6px">UTF-8</div>
<div class="t" style="left:1695.5px;top:1062.80px;font-size:12.4px;color:#3b3b3b">LF</div>
<div class="t" style="left:1726.5px;top:1062.80px;font-size:12.4px;color:#3b3b3b;letter-spacing:1px">{ }</div>
<div class="t" style="left:1747.5px;top:1062.80px;font-size:12.4px;color:#3b3b3b">C++</div>
<svg style="left:1787px;top:1061px" width="17" height="16" viewBox="0 0 17 16"><circle cx="5.6" cy="4.3" r="2.9" fill="none" stroke="#3b3b3b" stroke-width="1.4"/><circle cx="11.4" cy="4.3" r="2.9" fill="none" stroke="#3b3b3b" stroke-width="1.4"/><path d="M2.6 7.3 Q1 8.4 1 10.4 Q1 14.2 8.5 14.2 Q16 14.2 16 10.4 Q16 8.4 14.4 7.3" fill="none" stroke="#3b3b3b" stroke-width="1.7"/><path d="M3 8 H14" stroke="#3b3b3b" stroke-width="1"/><rect x="6.1" y="9.6" width="1.3" height="2.6" fill="#3b3b3b"/><rect x="9.6" y="9.6" width="1.3" height="2.6" fill="#3b3b3b"/></svg>
<div class="t" style="left:1820px;top:1062.80px;font-size:12.4px;color:#3b3b3b;letter-spacing:0.2px">PlatformIO</div>
<svg style="left:1897px;top:1061px" width="15" height="16" viewBox="0 0 15 16" fill="none" stroke="#3b3b3b" stroke-width="1.1"><path d="M7.6 1.7 Q3.4 1.7 3.4 6 V9.9 L1.6 12.6 H12.8 L11 9.9 V8"/><path d="M5.9 13.4 Q7.2 15.4 8.5 13.4"/><circle cx="11.2" cy="3.9" r="2.6" fill="#3b3b3b" stroke="none"/></svg>
</body></html>
